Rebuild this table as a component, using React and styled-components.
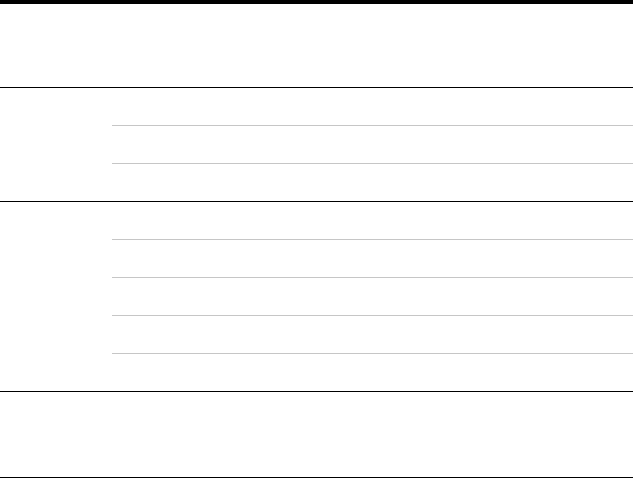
import React from "react";
import styled, { createGlobalStyle } from "styled-components";

const Global = createGlobalStyle`
  html, body { margin: 0; padding: 0; background: #fff; }
  body { font-family: "Liberation Sans", Arial, sans-serif; }
`;

const Table = styled.div`
  width: 633px;
  border-top: 4px solid #000;
  display: flex;
  flex-direction: column;
`;

const Block = styled.div`
  height: ${(p) => p.$h}px;
  border-bottom: 1px solid #000;
`;

const Group = styled.div`
  display: grid;
  grid-template-columns: 112px 1fr;
  border-bottom: 1px solid #000;
`;

const Label = styled.div``;

const SubRows = styled.div`
  display: flex;
  flex-direction: column;
`;

const SubRow = styled.div`
  height: 37px;
  border-bottom: 1px solid #c6c6c6;
  &:last-child {
    border-bottom: none;
    height: 37px;
  }
`;

export default function App() {
  return (
    <>
      <Global />
      <Table>
        <Block $h={83} />
        <Group>
          <Label />
          <SubRows>
            {[0, 1, 2].map((i) => (
              <SubRow key={i} />
            ))}
          </SubRows>
        </Group>
        <Group>
          <Label />
          <SubRows>
            {[0, 1, 2, 3, 4].map((i) => (
              <SubRow key={i} />
            ))}
          </SubRows>
        </Group>
        <Block $h={85} />
      </Table>
    </>
  );
}
